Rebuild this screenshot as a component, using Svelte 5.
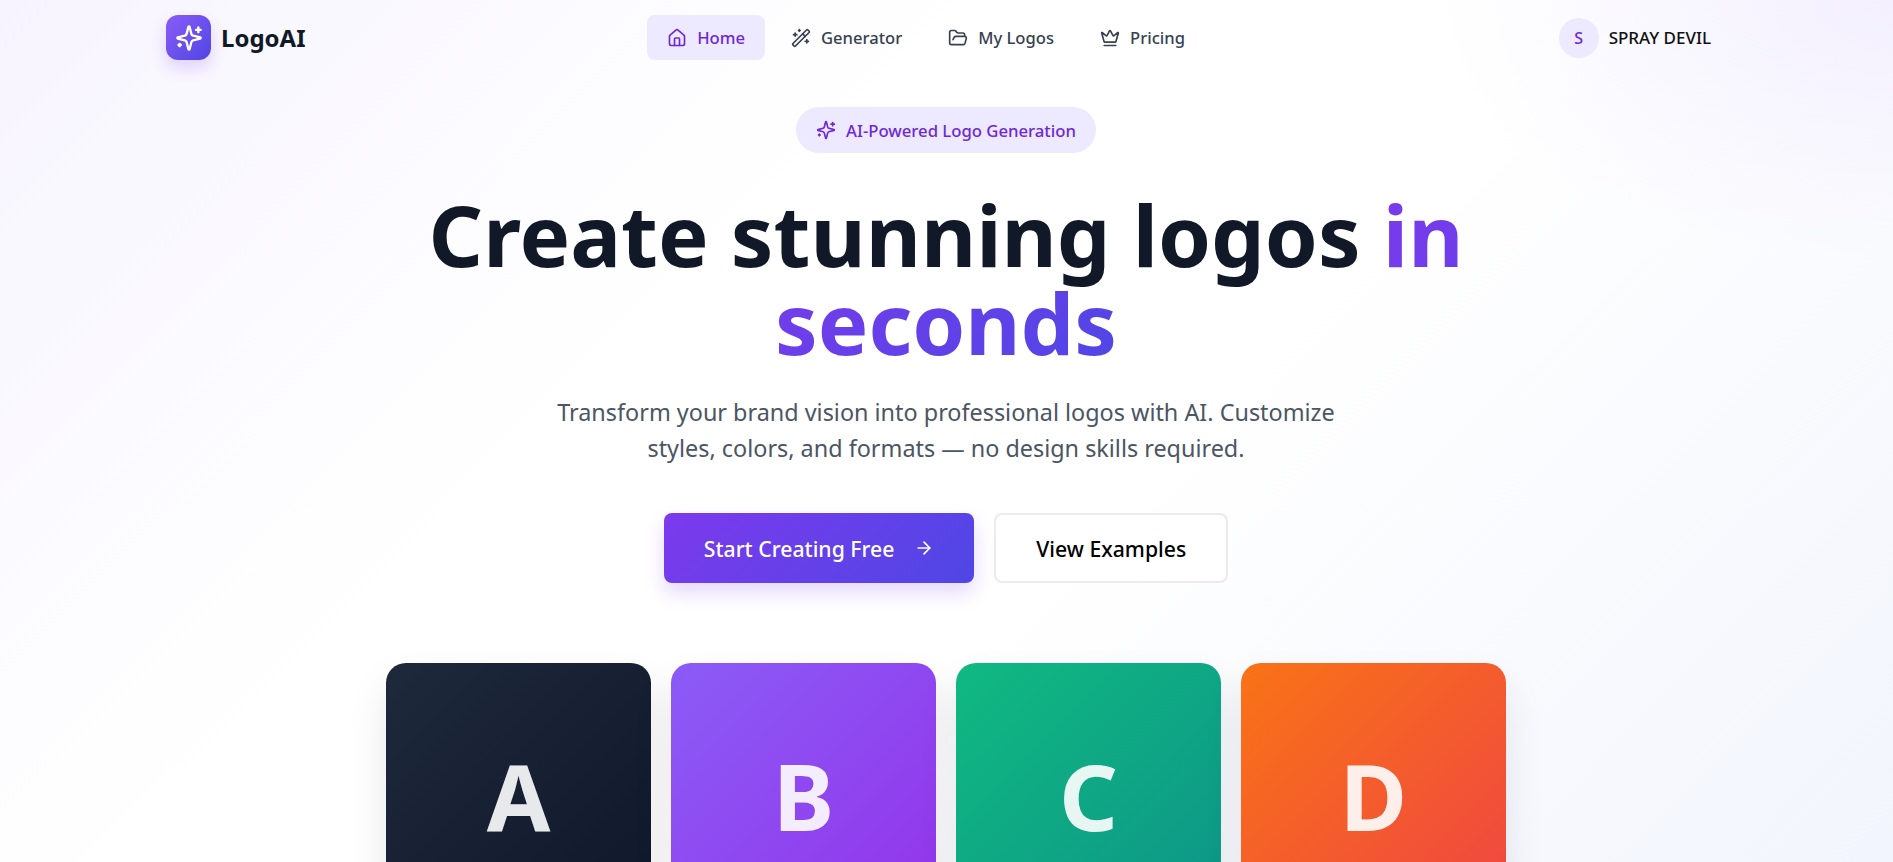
<script>
	const nav = [
		{ label: 'Home', icon: 'home', active: true },
		{ label: 'Generator', icon: 'wand' },
		{ label: 'My Logos', icon: 'folder' },
		{ label: 'Pricing', icon: 'crown' }
	];
	const cards = [
		{ letter: 'A', tone: 'ink' },
		{ letter: 'B', tone: 'violet' },
		{ letter: 'C', tone: 'green' },
		{ letter: 'D', tone: 'orange' }
	];
</script>

{#snippet sparkles(size)}
	<svg width={size} height={size} viewBox="0 0 24 24" fill="none" stroke="currentColor" stroke-width="2" stroke-linecap="round" stroke-linejoin="round">
		<path d="M9.937 15.5A2 2 0 0 0 8.5 14.063l-6.135-1.582a.5.5 0 0 1 0-.962L8.5 9.936A2 2 0 0 0 9.937 8.5l1.582-6.135a.5.5 0 0 1 .963 0L14.063 8.5A2 2 0 0 0 15.5 9.937l6.135 1.581a.5.5 0 0 1 0 .964L15.5 14.063a2 2 0 0 0-1.437 1.437l-1.582 6.135a.5.5 0 0 1-.963 0z" />
		<path d="M20 3v4" />
		<path d="M22 5h-4" />
		<path d="M4 17v2" />
		<path d="M5 18H3" />
	</svg>
{/snippet}

{#snippet navIcon(name)}
	<svg width="20" height="20" viewBox="0 0 24 24" fill="none" stroke="currentColor" stroke-width="2" stroke-linecap="round" stroke-linejoin="round">
		{#if name === 'home'}
			<path d="M15 21v-8a1 1 0 0 0-1-1h-4a1 1 0 0 0-1 1v8" />
			<path d="M3 10a2 2 0 0 1 .709-1.528l7-5.999a2 2 0 0 1 2.582 0l7 5.999A2 2 0 0 1 21 10v9a2 2 0 0 1-2 2H5a2 2 0 0 1-2-2z" />
		{:else if name === 'wand'}
			<path d="m21.64 3.64-1.28-1.28a1.21 1.21 0 0 0-1.72 0L2.36 18.64a1.21 1.21 0 0 0 0 1.72l1.28 1.28a1.2 1.2 0 0 0 1.72 0L21.64 5.36a1.2 1.2 0 0 0 0-1.72" />
			<path d="m14 7 3 3" />
			<path d="M5 6v4" />
			<path d="M19 14v4" />
			<path d="M10 2v2" />
			<path d="M7 8H3" />
			<path d="M21 16h-4" />
			<path d="M11 3H9" />
		{:else if name === 'folder'}
			<path d="m6 14 1.5-2.9A2 2 0 0 1 9.24 10H20a2 2 0 0 1 1.94 2.5l-1.54 6a2 2 0 0 1-1.95 1.5H4a2 2 0 0 1-2-2V5a2 2 0 0 1 2-2h3.9a2 2 0 0 1 1.69.9l.81 1.2a2 2 0 0 0 1.67.9H18a2 2 0 0 1 2 2v2" />
		{:else}
			<path d="M11.562 3.266a.5.5 0 0 1 .876 0L15.39 8.87a1 1 0 0 0 1.516.294L21.183 5.5a.5.5 0 0 1 .798.519l-2.834 10.246a1 1 0 0 1-.956.734H5.81a1 1 0 0 1-.957-.734L2.02 6.02a.5.5 0 0 1 .798-.519l4.276 3.664a1 1 0 0 0 1.516-.294z" />
			<path d="M5 21h14" />
		{/if}
	</svg>
{/snippet}

<div class="page">
	<header class="topbar">
		<div class="brand">
			<span class="brand-mark">{@render sparkles(28)}</span>
			<span class="brand-name">LogoAI</span>
		</div>
		<nav class="links">
			{#each nav as item}
				<span class="link" class:active={item.active}>
					{@render navIcon(item.icon)}
					{item.label}
				</span>
			{/each}
		</nav>
		<div class="user">
			<span class="avatar">S</span>
			<span class="user-name">SPRAY DEVIL</span>
		</div>
	</header>

	<main class="hero">
		<div class="badge">
			{@render sparkles(20)}
			AI-Powered Logo Generation
		</div>
		<h1>Create stunning logos <span class="accent">in seconds</span></h1>
		<p class="lead">Transform your brand vision into professional logos with AI. Customize styles, colors, and formats — no design skills required.</p>
		<div class="actions">
			<button class="btn primary">
				Start Creating Free
				<svg width="20" height="20" viewBox="0 0 24 24" fill="none" stroke="currentColor" stroke-width="2" stroke-linecap="round" stroke-linejoin="round">
					<path d="M5 12h14" />
					<path d="m12 5 7 7-7 7" />
				</svg>
			</button>
			<button class="btn ghost">View Examples</button>
		</div>
		<div class="samples">
			{#each cards as card}
				<div class="sample {card.tone}"><span>{card.letter}</span></div>
			{/each}
		</div>
	</main>
</div>

<style>
	:global(body) {
		overflow: hidden;
		background: #fff;
	}

	.page {
		height: 862px;
		overflow: hidden;
		box-sizing: border-box;
		font-family: "Noto Sans", "Open Sans", sans-serif;
		background:
			radial-gradient(ellipse 460px 260px at 100% 0%, #f4f0ff 0%, rgba(244, 240, 255, 0) 100%),
			linear-gradient(135deg, #f7f4ff 0%, #ffffff 36%, #ffffff 58%, #f2f5fd 100%);
	}

	.topbar {
		display: flex;
		justify-content: space-between;
		align-items: center;
		box-sizing: border-box;
		width: 1545px;
		margin-left: 166px;
		height: 75px;
	}

	.brand {
		display: flex;
		align-items: center;
		gap: 10px;
	}

	.brand-mark {
		width: 45px;
		height: 45px;
		border-radius: 12px;
		display: flex;
		align-items: center;
		justify-content: center;
		color: #fff;
		background: linear-gradient(135deg, #8b5cf6, #4f46e5);
		box-shadow: 0 8px 16px rgba(124, 58, 237, 0.2);
	}

	.brand-name {
		font-size: 24px;
		font-weight: 700;
		color: #111827;
	}

	.links {
		display: flex;
		gap: 6px;
		margin-right: 12px;
	}

	.link {
		display: flex;
		align-items: center;
		gap: 10px;
		height: 45px;
		padding: 0 20px;
		border-radius: 8px;
		font-size: 16.6px;
		font-weight: 500;
		color: #374151;
	}

	.link.active {
		color: #6d28d9;
		background: #ede9fe;
	}

	.user {
		display: flex;
		align-items: center;
		gap: 10px;
	}

	.avatar {
		width: 40px;
		height: 40px;
		border-radius: 50%;
		display: flex;
		align-items: center;
		justify-content: center;
		font-size: 16px;
		font-weight: 500;
		color: #6d28d9;
		background: #ede9fe;
	}

	.user-name {
		font-size: 17px;
		font-weight: 500;
		color: #111;
	}

	.hero {
		display: flex;
		flex-direction: column;
		align-items: center;
		padding: 32px 1px 0 0;
	}

	.badge {
		display: flex;
		align-items: center;
		gap: 10px;
		height: 46px;
		padding: 0 20px;
		border-radius: 23px;
		font-size: 16.7px;
		font-weight: 500;
		color: #6d28d9;
		background: #ede9fe;
	}

	h1 {
		margin: 37px 0 0;
		max-width: 1100px;
		font-size: 85px;
		line-height: 88px;
		font-weight: 700;
		text-align: center;
		color: #111827;
	}

	.accent {
		background: linear-gradient(135deg, #7c3aed, #4f46e5);
		-webkit-background-clip: text;
		background-clip: text;
		color: transparent;
	}

	.lead {
		margin: 28px 0 0;
		max-width: 800px;
		font-size: 23.4px;
		line-height: 36px;
		text-align: center;
		color: #4b5563;
	}

	.actions {
		display: flex;
		gap: 20px;
		margin-top: 47px;
	}

	.btn {
		display: flex;
		align-items: center;
		gap: 20px;
		height: 70px;
		padding: 0 40px;
		border-radius: 8px;
		font-family: inherit;
		font-size: 21.2px;
		font-weight: 500;
	}

	.primary {
		border: 0;
		color: #fff;
		background: linear-gradient(135deg, #7c3aed, #4f46e5);
		box-shadow: 0 10px 20px rgba(124, 58, 237, 0.2);
	}

	.ghost {
		border: 2px solid #ebebef;
		color: #000;
		background: #fff;
	}

	.samples {
		display: grid;
		grid-template-columns: repeat(4, 265px);
		gap: 20px;
		margin-top: 80px;
	}

	.sample {
		height: 265px;
		border-radius: 20px;
		display: flex;
		align-items: center;
		justify-content: center;
		box-shadow: 0 20px 40px rgba(17, 24, 39, 0.09);
	}

	.sample span {
		font-size: 92px;
		font-weight: 700;
		color: rgba(255, 255, 255, 0.9);
	}

	.ink { background: linear-gradient(135deg, #1e293b, #0f172a); }
	.violet { background: linear-gradient(135deg, #8b5cf6, #9333ea); }
	.green { background: linear-gradient(135deg, #10b981, #0d9488); }
	.orange { background: linear-gradient(135deg, #f97316, #ef4444); }
</style>
